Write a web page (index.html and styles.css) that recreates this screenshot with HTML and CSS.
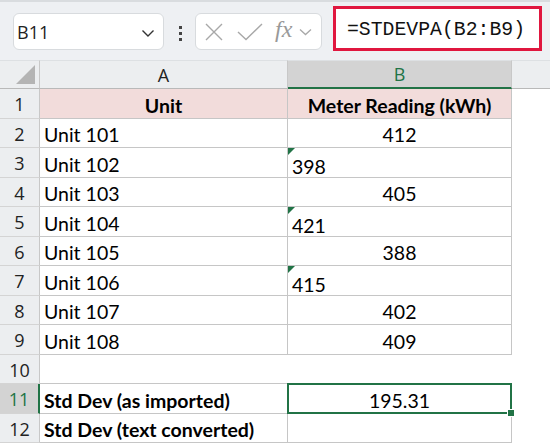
FILE: index.html
```html
<!DOCTYPE html>
<html lang="en">
<head>
    <meta charset="UTF-8">
    <title>STDEVPA</title>
    <link rel="stylesheet" href="styles.css">
</head>
<body>

    <div class="toolbar">
        <div class="namebox">
            <span>B11</span>
            <svg width="14" height="10" viewBox="0 0 14 10"><path d="M1.5 2.5 L7 8 L12.5 2.5" fill="none" stroke="#333" stroke-width="1.4"/></svg>
        </div>
        <div class="dots"><i></i><i></i><i></i></div>
        <div class="fbuttons">
            <svg width="20" height="20" viewBox="0 0 20 20"><path d="M2 2 L18 18 M18 2 L2 18" stroke="#a8a8a8" stroke-width="1.4" fill="none"/></svg>
            <svg width="26" height="18" viewBox="0 0 26 18"><path d="M1 9 L9 16.5 L25 1" stroke="#a8a8a8" stroke-width="1.4" fill="none"/></svg>
            <span class="fx">fx</span>
            <svg width="13" height="8" viewBox="0 0 13 8"><path d="M1 1.5 L6.5 6.5 L12 1.5" fill="none" stroke="#a8a8a8" stroke-width="1.3"/></svg>
        </div>
        <div class="formula">=STDEVPA(B2:B9)</div>
    </div>

    <div class="sheet">
        <div class="corner"><span class="tri"></span></div>
        <div class="colhead">A</div>
        <div class="colhead active">B</div>
        <div class="colhead rest"></div>

        <div class="rowhead">1</div>
        <div class="cell head">Unit</div>
        <div class="cell head">Meter Reading (kWh)</div>
        <div class="blank"></div>

        <div class="rowhead">2</div>
        <div class="cell">Unit 101</div>
        <div class="cell num">412</div>
        <div class="blank"></div>

        <div class="rowhead">3</div>
        <div class="cell">Unit 102</div>
        <div class="cell txt">398</div>
        <div class="blank"></div>

        <div class="rowhead">4</div>
        <div class="cell">Unit 103</div>
        <div class="cell num">405</div>
        <div class="blank"></div>

        <div class="rowhead">5</div>
        <div class="cell">Unit 104</div>
        <div class="cell txt">421</div>
        <div class="blank"></div>

        <div class="rowhead">6</div>
        <div class="cell">Unit 105</div>
        <div class="cell num">388</div>
        <div class="blank"></div>

        <div class="rowhead">7</div>
        <div class="cell">Unit 106</div>
        <div class="cell txt">415</div>
        <div class="blank"></div>

        <div class="rowhead">8</div>
        <div class="cell">Unit 107</div>
        <div class="cell num">402</div>
        <div class="blank"></div>

        <div class="rowhead">9</div>
        <div class="cell">Unit 108</div>
        <div class="cell num">409</div>
        <div class="blank"></div>

        <div class="rowhead">10</div>
        <div class="cell empty"></div>
        <div class="cell empty last"></div>
        <div class="blank"></div>

        <div class="rowhead active">11</div>
        <div class="cell bold">Std Dev (as imported)</div>
        <div class="cell num selected">195.31<span class="handle"></span></div>
        <div class="blank"></div>

        <div class="rowhead">12</div>
        <div class="cell bold">Std Dev (text converted)</div>
        <div class="cell"></div>
        <div class="blank"></div>
    </div>

</body>
</html>
```

FILE: styles.css
```css
body {
    margin: 0;
    width: 550px;
    height: 446px;
    overflow: hidden;
    background: #fff;
    font-family: Lato, "Open Sans", sans-serif;
}

/* formula bar */
.toolbar {
    height: 58px;
    background: #eef0f3;
    border-top: 2px solid #d9dcdf;
    display: flex;
    align-items: flex-start;
}
.namebox {
    box-sizing: border-box;
    margin: 11px 0 0 13px;
    width: 151px;
    height: 37px;
    background: #fff;
    border: 1px solid #d8dbde;
    border-radius: 6px;
    display: flex;
    align-items: center;
    justify-content: space-between;
    padding: 0 8px 0 3px;
    font-family: "Open Sans", sans-serif;
    font-size: 18px;
    color: #222;
}
.namebox svg {
    margin-top: 2px;
}
.dots {
    margin: 24px 0 0 15px;
    width: 4px;
    display: flex;
    flex-direction: column;
    gap: 3px;
}
.dots i {
    display: block;
    width: 3px;
    height: 3px;
    background: #444;
}
.fbuttons {
    box-sizing: border-box;
    margin: 11px 0 0 12px;
    width: 127px;
    height: 37px;
    background: #fff;
    border: 1px solid #d8dbde;
    border-radius: 6px;
    display: flex;
    align-items: center;
    padding: 0 4px 0 8px;
}
.fbuttons svg:nth-child(1) { margin-right: 13px; }
.fbuttons svg:nth-child(2) { margin-right: 12px; }
.fx {
    font-family: "Liberation Serif", serif;
    font-style: italic;
    font-size: 24px;
    color: #999;
    margin-right: 7px;
    margin-top: -4px;
}
.formula {
    box-sizing: border-box;
    margin: 4px 0 0 11px;
    width: 209px;
    height: 45px;
    background: #fff;
    border: 3px solid #e0173f;
    font-family: "Liberation Mono", monospace;
    font-size: 19.8px;
    color: #111;
    padding: 2px 0 0 11px;
    line-height: 38px;
}

/* grid */
.sheet {
    display: grid;
    grid-template-columns: 40px 248px 224px 1fr;
    grid-template-rows: 29px repeat(12, 29.5px);
    font-size: 19.5px;
    color: #000;
}
.corner,
.colhead {
    background: #eceef0;
    border-top: 1px solid #dde0e3;
    border-bottom: 1px solid #b9b9b9;
    box-sizing: border-box;
}
.corner {
    border-right: 1px solid #c8c8c8;
    position: relative;
}
.tri {
    position: absolute;
    right: 4px;
    bottom: 4px;
    width: 0;
    height: 0;
    border-left: 19px solid transparent;
    border-bottom: 19px solid #b4b4b4;
}
.colhead {
    border-right: 1px solid #c8c8c8;
    display: flex;
    align-items: center;
    justify-content: center;
    font-family: "Open Sans", sans-serif;
    font-size: 18px;
    color: #222;
}
.colhead.active {
    background: #d3d3d3;
    color: #217346;
    border-bottom: 2px solid #217346;
}
.colhead.rest {
    border-right: none;
}
.rowhead {
    background: #eceef0;
    border-right: 1px solid #c8c8c8;
    border-bottom: 1px solid #d4d4d4;
    box-sizing: border-box;
    display: flex;
    align-items: center;
    justify-content: center;
    font-family: "Open Sans", sans-serif;
    font-size: 18px;
    color: #222;
    padding-top: 2px;
}
.rowhead.active {
    background: #d3d3d3;
    color: #217346;
    border-right: 2px solid #217346;
}
.cell {
    box-sizing: border-box;
    border-right: 1px solid #c6c6c6;
    border-bottom: 1px solid #c6c6c6;
    display: flex;
    align-items: center;
    padding: 4px 0 0 4px;
    white-space: nowrap;
    position: relative;
}
.cell.head {
    background: #f2dcdb;
    font-weight: bold;
    justify-content: center;
    padding-left: 0;
}
.cell.num {
    justify-content: center;
    padding-left: 0;
}
.cell.txt {
    padding-top: 8px;
}
.cell.txt::before {
    content: "";
    position: absolute;
    left: 0;
    top: 0;
    border-top: 7px solid #217346;
    border-right: 7px solid transparent;
}
.cell.empty {
    border-right: none;
}
.cell.last {
    border-bottom: none;
}
.cell.bold {
    font-weight: bold;
}
.cell.selected::after {
    content: "";
    position: absolute;
    left: -1px;
    top: -1px;
    right: -1px;
    bottom: -1px;
    border: 2px solid #217346;
}
.handle {
    position: absolute;
    right: -4px;
    bottom: -4px;
    width: 6px;
    height: 6px;
    background: #217346;
    border: 1px solid #fff;
    z-index: 2;
}
.blank {
    background: #fff;
}
```
